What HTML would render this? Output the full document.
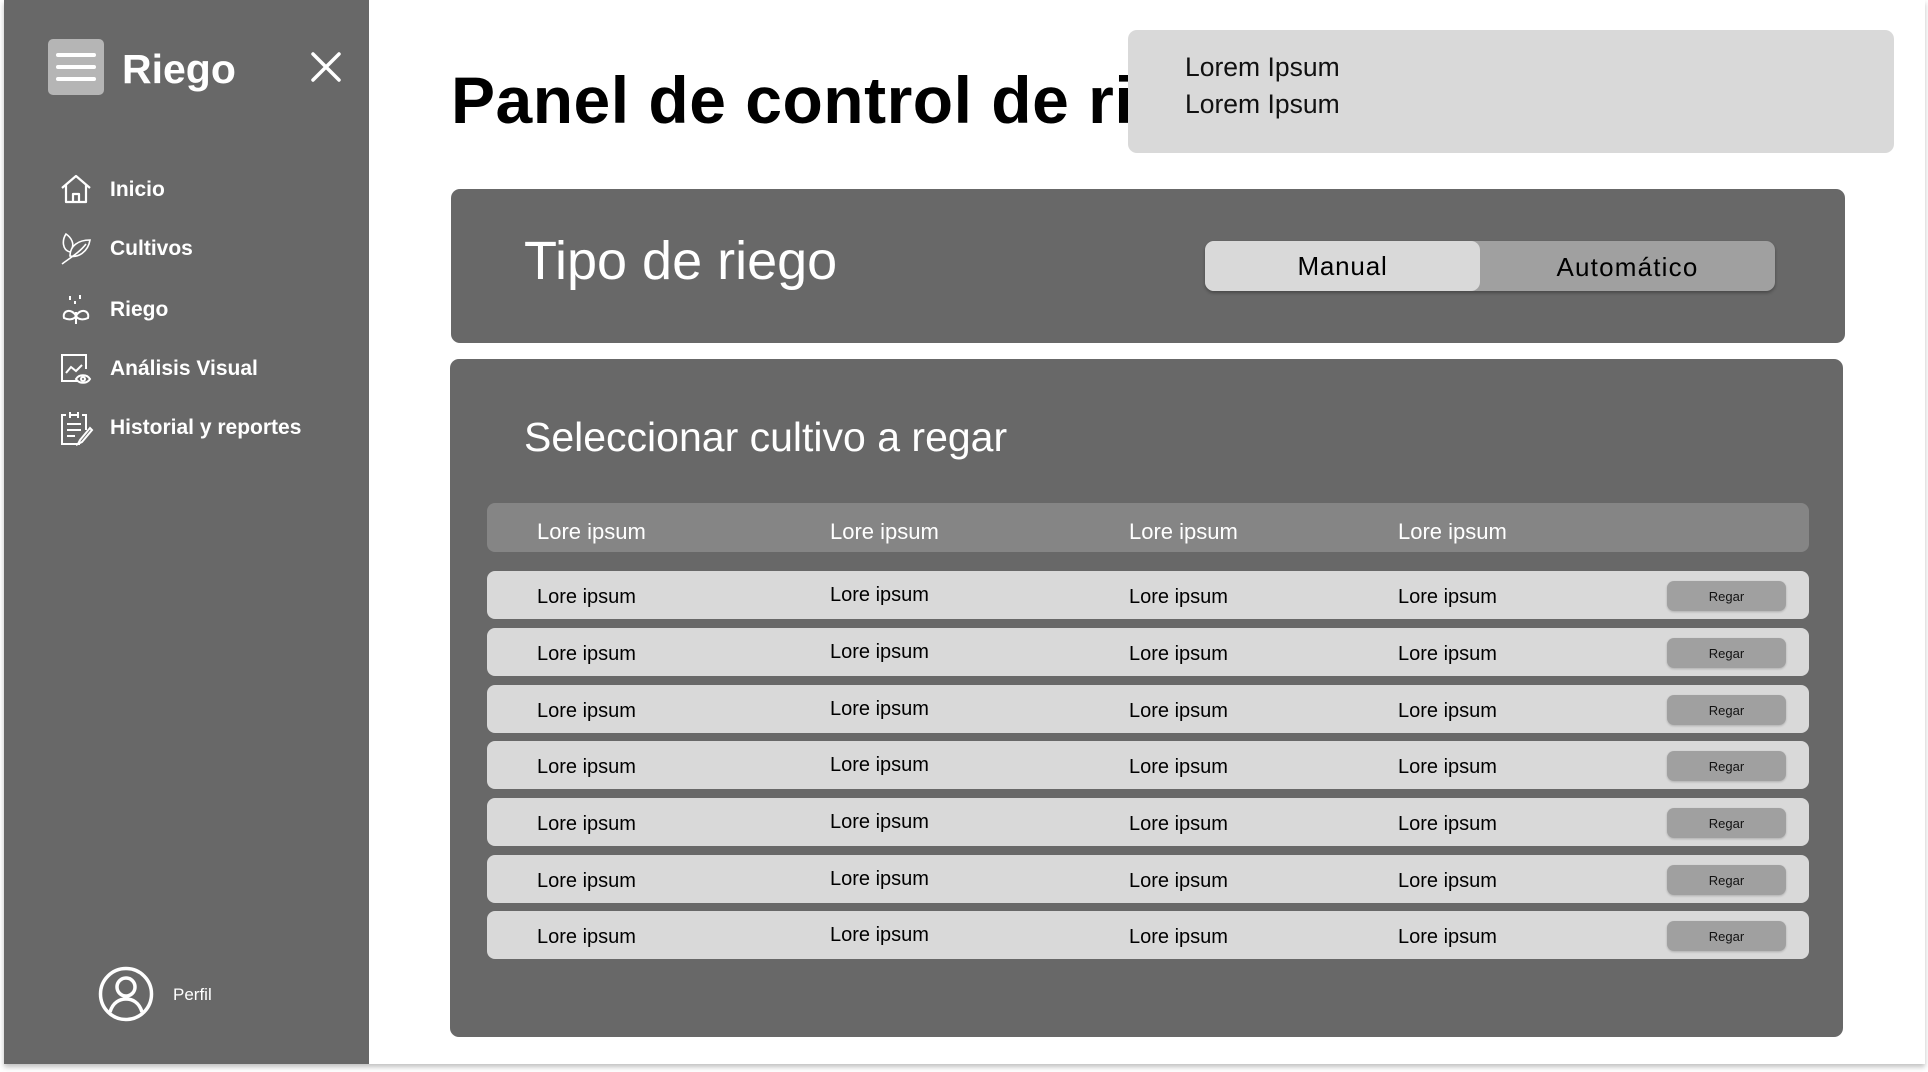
<!DOCTYPE html>
<html><head><meta charset="utf-8"><style>
*{margin:0;padding:0;box-sizing:border-box}
body{width:1928px;height:1072px;background:#fff;font-family:"Liberation Sans",sans-serif;position:relative;overflow:hidden}
.page{position:absolute;left:4px;top:0;width:1921px;height:1064px;background:#fff;box-shadow:0 3px 5px rgba(0,0,0,.25)}
.abs{position:absolute}
.side{position:absolute;left:4px;top:0;width:365px;height:1064px;background:#686868}
.nav{position:absolute;left:110px;color:#fff;font-weight:bold;font-size:21px;line-height:24px}
.ico{position:absolute;left:60px}
.panel{position:absolute;background:#686868;border-radius:9px}
.row{position:absolute;left:487px;width:1322px;height:48px;background:#d9d9d9;border-radius:8px}
.row span{position:absolute;top:15px;font-size:20px;color:#000}
.hdr span{color:#fff;font-size:22px;top:16px}
.btn{position:absolute;left:1180px;top:10px;width:119px;height:30px;background:#a0a0a0;border-radius:7px;font-size:13px;text-align:center;line-height:32px;color:#111;box-shadow:0 1px 2px rgba(0,0,0,.2)}
</style></head><body>
<div class="page"></div>
<div class="side"></div>
<div class="abs" style="left:48px;top:39px;width:56px;height:56px;background:#b5b5b5;border-radius:5px"></div>
<div class="abs" style="left:56px;top:53px;width:40px;height:4px;background:#fff;border-radius:2px"></div>
<div class="abs" style="left:56px;top:65px;width:40px;height:4px;background:#fff;border-radius:2px"></div>
<div class="abs" style="left:56px;top:77px;width:40px;height:4px;background:#fff;border-radius:2px"></div>
<div class="abs" style="left:122px;top:44px;color:#fff;font-weight:bold;font-size:41px;line-height:50px">Riego</div>
<svg class="abs" style="left:310px;top:51px" width="32" height="32" viewBox="0 0 32 32"><path d="M3 3L29 29M29 3L3 29" stroke="#fff" stroke-width="3.5" stroke-linecap="round"/></svg>

<svg class="ico" style="top:174px" width="32" height="30" viewBox="0 0 32 30" fill="none" stroke="#fff" stroke-width="2.2" stroke-linejoin="round"><path d="M2 14L16 2L30 14M6 11V28H26V11M13 28V20H19V28"/></svg>
<div class="nav" style="top:178px">Inicio</div>
<svg class="ico" style="top:232px" width="32" height="34" viewBox="0 0 32 34" fill="none" stroke="#fff" stroke-width="1.6"><path d="M2 32C10 26 20 20 26 12M30 8C18 8 10 14 10 24C18 26 28 20 30 8ZM10 20C2 18 2 8 6 2C12 6 14 12 12 16"/></svg>
<div class="nav" style="top:237px">Cultivos</div>
<svg class="ico" style="top:294px" width="32" height="32" viewBox="0 0 32 32" fill="none" stroke="#fff" stroke-width="2"><path d="M10 2V6M20 1V5M15 7V10M16 30V18M16 22C12 14 2 16 4 24C8 26 14 26 16 22ZM16 22C20 14 30 16 28 24C24 26 18 26 16 22Z"/></svg>
<div class="nav" style="top:298px">Riego</div>
<svg class="ico" style="top:353px" width="32" height="32" viewBox="0 0 32 32" fill="none" stroke="#fff" stroke-width="2"><path d="M18 28H2V2H26V16M6 20L11 14L16 18L22 12"/><path d="M16 26C19 21 27 21 30 26C27 31 19 31 16 26Z"/><circle cx="23" cy="26" r="2"/></svg>
<div class="nav" style="top:357px">Análisis Visual</div>
<svg class="ico" style="top:410px" width="34" height="36" viewBox="0 0 34 36" fill="none" stroke="#fff" stroke-width="2"><path d="M6 5H2V34H20M22 5H26V20M10 2V8M18 2V8M10 5H18M7 14H21M7 20H21M7 26H15M30 18L20 30L18 34L22 32L32 20Z"/></svg>
<div class="nav" style="top:416px">Historial y reportes</div>

<svg class="abs" style="left:98px;top:966px" width="56" height="56" viewBox="0 0 56 56" fill="none" stroke="#fff" stroke-width="3.5"><circle cx="28" cy="28" r="25.5"/><circle cx="28" cy="21" r="9"/><path d="M12 46C15 36 22 33 28 33C34 33 41 36 44 46"/></svg>
<div class="abs" style="left:173px;top:985px;color:#fff;font-size:17px">Perfil</div>

<div class="abs" style="left:451px;top:60px;font-weight:bold;font-size:66px;line-height:80px;color:#000;white-space:nowrap;letter-spacing:0.5px">Panel de control de ri</div>
<div class="abs" style="left:1128px;top:30px;width:766px;height:123px;background:#d9d9d9;border-radius:9px"></div>
<div class="abs" style="left:1185px;top:49px;font-size:26.5px;line-height:37px;color:#111">Lorem Ipsum<br>Lorem Ipsum</div>

<div class="panel" style="left:451px;top:189px;width:1394px;height:154px"></div>
<div class="abs" style="left:524px;top:231px;color:#fff;font-size:54px;line-height:60px">Tipo de riego</div>
<div class="abs" style="left:1205px;top:241px;width:570px;height:50px;background:#a0a0a0;border-radius:9px;box-shadow:0 2px 3px rgba(0,0,0,.3)"></div>
<div class="abs" style="left:1205px;top:241px;width:275px;height:50px;background:#d9d9d9;border-radius:9px;text-align:center;line-height:50px;font-size:26px;letter-spacing:0.8px">Manual</div>
<div class="abs" style="left:1480px;top:242px;width:295px;height:50px;text-align:center;line-height:50px;font-size:26px;letter-spacing:1.2px">Automático</div>

<div class="panel" style="left:450px;top:359px;width:1393px;height:678px"></div>
<div class="abs" style="left:524px;top:414px;color:#fff;font-size:41px;line-height:46px">Seleccionar cultivo a regar</div>

<div class="row hdr" style="top:503px;height:49px;background:#858585"><span style="left:50px">Lore ipsum</span><span style="left:343px">Lore ipsum</span><span style="left:642px">Lore ipsum</span><span style="left:911px">Lore ipsum</span></div>

<div class="row" style="top:571px"><span style="left:50px">Lore ipsum</span><span style="left:343px;top:13px">Lore ipsum</span><span style="left:642px">Lore ipsum</span><span style="left:911px">Lore ipsum</span><div class="btn">Regar</div></div>
<div class="row" style="top:628px"><span style="left:50px">Lore ipsum</span><span style="left:343px;top:13px">Lore ipsum</span><span style="left:642px">Lore ipsum</span><span style="left:911px">Lore ipsum</span><div class="btn">Regar</div></div>
<div class="row" style="top:685px"><span style="left:50px">Lore ipsum</span><span style="left:343px;top:13px">Lore ipsum</span><span style="left:642px">Lore ipsum</span><span style="left:911px">Lore ipsum</span><div class="btn">Regar</div></div>
<div class="row" style="top:741px"><span style="left:50px">Lore ipsum</span><span style="left:343px;top:13px">Lore ipsum</span><span style="left:642px">Lore ipsum</span><span style="left:911px">Lore ipsum</span><div class="btn">Regar</div></div>
<div class="row" style="top:798px"><span style="left:50px">Lore ipsum</span><span style="left:343px;top:13px">Lore ipsum</span><span style="left:642px">Lore ipsum</span><span style="left:911px">Lore ipsum</span><div class="btn">Regar</div></div>
<div class="row" style="top:855px"><span style="left:50px">Lore ipsum</span><span style="left:343px;top:13px">Lore ipsum</span><span style="left:642px">Lore ipsum</span><span style="left:911px">Lore ipsum</span><div class="btn">Regar</div></div>
<div class="row" style="top:911px"><span style="left:50px">Lore ipsum</span><span style="left:343px;top:13px">Lore ipsum</span><span style="left:642px">Lore ipsum</span><span style="left:911px">Lore ipsum</span><div class="btn">Regar</div></div>
</body></html>
